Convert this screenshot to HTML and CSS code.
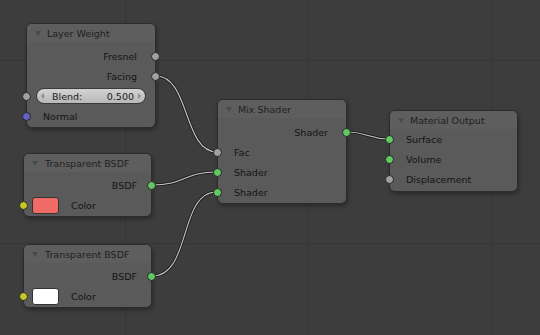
FILE: index.html
```html
<!DOCTYPE html>
<html lang="en">
<head>
    <meta charset="UTF-8">
    <title>Node Editor</title>
    <link rel="stylesheet" href="styles.css">
</head>
<body>
    <div class="editor">
        <svg class="links" width="540" height="335" viewBox="0 0 540 335">
            <g class="link-shadow">
                <path d="M156,76 C190,76 183,152 217,152"/>
                <path d="M152,185 C185,185 184,172 217,172"/>
                <path d="M152,276 C192,276 178,192 217,192"/>
                <path d="M347,132 C368,132 368,139 389,139"/>
            </g>
            <g class="link-line">
                <path d="M156,76 C190,76 183,152 217,152"/>
                <path d="M152,185 C185,185 184,172 217,172"/>
                <path d="M152,276 C192,276 178,192 217,192"/>
                <path d="M347,132 C368,132 368,139 389,139"/>
            </g>
        </svg>

        <div class="node layer-weight">
            <div class="node-header"><span class="collapse"></span>Layer Weight</div>
            <div class="node-body">
                <div class="row out">Fresnel<span class="socket value"></span></div>
                <div class="row out">Facing<span class="socket value"></span></div>
                <div class="row in slider-row">
                    <span class="socket value"></span>
                    <div class="slider">
                        <span class="arrow left"></span>
                        <span>Blend:</span>
                        <span class="slider-value">0.500</span>
                        <span class="arrow right"></span>
                    </div>
                </div>
                <div class="row in">
                    <span class="socket vector"></span>Normal</div>
            </div>
        </div>

        <div class="node transparent first">
            <div class="node-header"><span class="collapse"></span>Transparent BSDF</div>
            <div class="node-body">
                <div class="row out">BSDF<span class="socket shader"></span></div>
                <div class="row in color-row">
                    <span class="socket color"></span>
                    <span class="swatch salmon"></span>Color</div>
            </div>
        </div>

        <div class="node transparent second">
            <div class="node-header"><span class="collapse"></span>Transparent BSDF</div>
            <div class="node-body">
                <div class="row out">BSDF<span class="socket shader"></span></div>
                <div class="row in color-row">
                    <span class="socket color"></span>
                    <span class="swatch white"></span>Color</div>
            </div>
        </div>

        <div class="node mix-shader">
            <div class="node-header"><span class="collapse"></span>Mix Shader</div>
            <div class="node-body">
                <div class="row out">Shader<span class="socket shader"></span></div>
                <div class="row in"><span class="socket value"></span>Fac</div>
                <div class="row in"><span class="socket shader"></span>Shader</div>
                <div class="row in"><span class="socket shader"></span>Shader</div>
            </div>
        </div>

        <div class="node material-output">
            <div class="node-header"><span class="collapse"></span>Material Output</div>
            <div class="node-body">
                <div class="row in"><span class="socket shader"></span>Surface</div>
                <div class="row in"><span class="socket shader"></span>Volume</div>
                <div class="row in"><span class="socket value"></span>Displacement</div>
            </div>
        </div>
    </div>
</body>
</html>
```

FILE: styles.css
```css
body { margin: 0; font-family: "DejaVu Sans", Verdana, sans-serif; font-size: 9.5px; color: #141414; }
.editor { position: relative; width: 540px; height: 335px; overflow: hidden; background-color: #3d3d3d;
    background-image: linear-gradient(to right, #363636 1px, transparent 1px), linear-gradient(to bottom, #363636 1px, transparent 1px);
    background-size: 183px 183px; background-position: 125px 60px; }

.links { position: absolute; left: 0; top: 0; }
.links path { fill: none; }
.link-shadow path { stroke: #1f1f1f; stroke-width: 3; }
.link-line path { stroke: #c6c6c6; stroke-width: 1.1; }

/* nodes sit on a free canvas */
.node { position: absolute; background: #5a5a5a; border: 1px solid #2c2c2c; border-radius: 6px; box-shadow: 1px 2px 4px rgba(0, 0, 0, 0.35); }
.layer-weight { left: 26px; top: 23px; width: 128px; }
.transparent { left: 23px; width: 127px; }
.transparent.first { top: 153px; }
.transparent.second { top: 244px; }
.mix-shader { left: 217px; top: 99px; width: 128px; }
.material-output { left: 389px; top: 110px; width: 127px; }

.node-header { height: 18px; display: flex; align-items: center; padding-left: 8px; background: #5e5e5e; border-radius: 5px 5px 0 0; color: #1e1e1e; }
.collapse { width: 0; height: 0; margin-right: 6px; border-left: 3px solid transparent; border-right: 3px solid transparent; border-top: 5px solid #4a4a4a; }
.transparent .collapse { margin-right: 7px; }

.node-body { padding: 4px 0 1px; }
.transparent .node-body { padding: 3px 0 1px; }
.material-output .node-body { padding: 0 0 2px; }

.row { position: relative; height: 20px; display: flex; align-items: center; }
.row.out { justify-content: flex-end; padding-right: 18px; }
.transparent .row.out { padding-right: 14px; }
.row.in { padding-left: 16px; }

.socket { position: absolute; top: 5.5px; width: 7px; height: 7px; border-radius: 50%; border: 1px solid #262626; }
.row.out .socket { right: -5px; }
.row.in .socket { left: -5px; }
.socket.value { background: #a1a1a1; }
.socket.shader { background: #63c763; }
.socket.vector { background: #6363c7; }
.socket.color { background: #c7c729; }

.row.slider-row { padding-left: 9px; }
.slider { flex: 0 0 110px; height: 16px; box-sizing: border-box; display: flex; align-items: center; padding: 0 4px; border: 1px solid #3a3a3a; border-radius: 8px; background: linear-gradient(#d2d2d2, #b9b9b9); color: #1a1a1a; }
.slider-value { margin-left: auto; margin-right: 4px; }
.arrow { width: 0; height: 0; border-top: 3px solid transparent; border-bottom: 3px solid transparent; }
.arrow.left { border-right: 3px solid #8a8a8a; margin-right: 8px; }
.arrow.right { border-left: 3px solid #8a8a8a; }

.row.color-row { padding-left: 8px; }
.swatch { width: 27px; height: 17px; box-sizing: border-box; border: 1px solid #333; border-radius: 3px; margin-right: 12px; }
.swatch.salmon { background: #f26a66; }
.swatch.white { background: #ffffff; }
```
